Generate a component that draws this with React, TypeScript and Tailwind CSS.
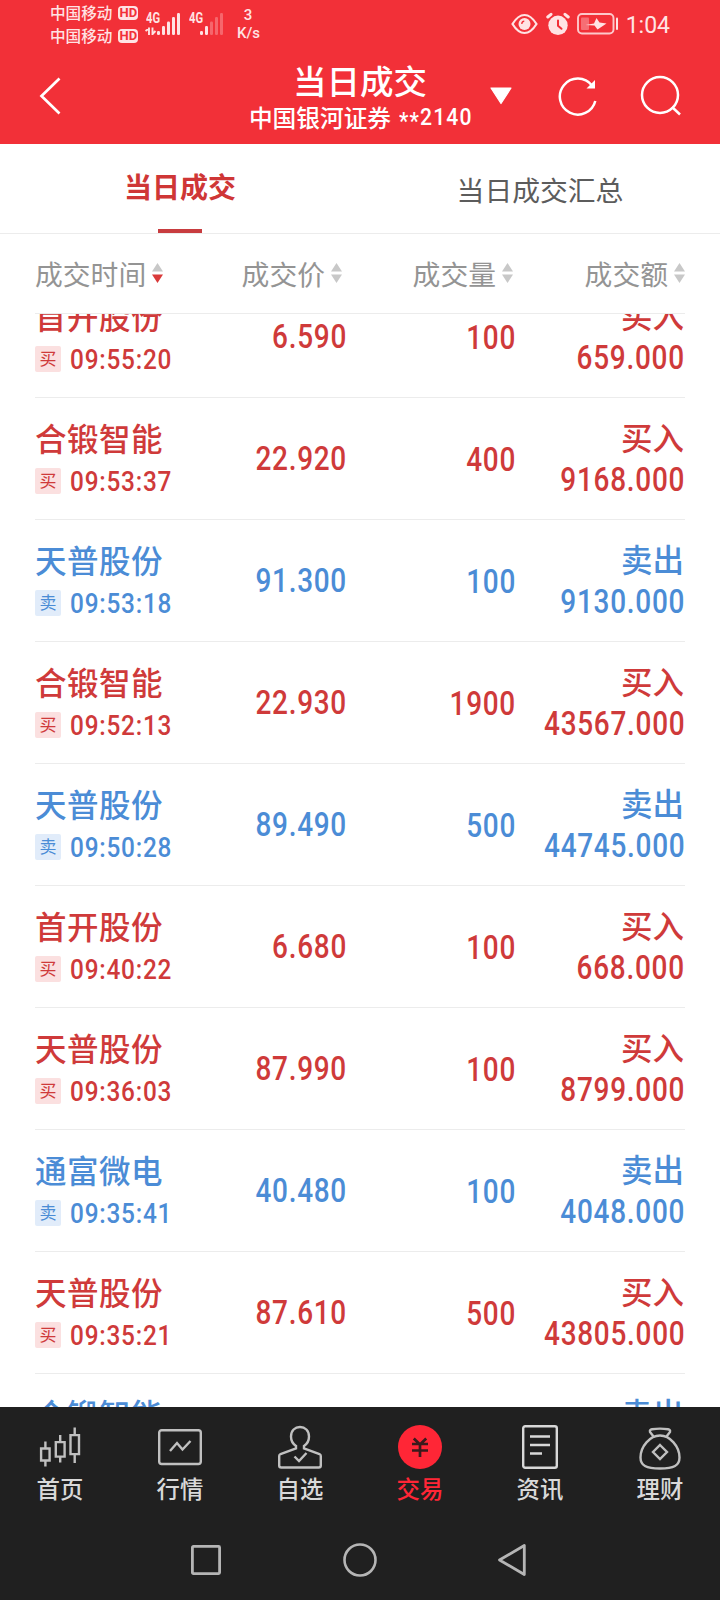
import type { ReactNode } from 'react';
import clsx from 'clsx';

interface Trade {
  name: string;
  time: string;
  price: string;
  volume: string;
  amount: string;
  side: 'buy' | 'sell';
}

const trades: Trade[] = [
  { name: '首开股份', time: '09:55:20', price: '6.590', volume: '100', amount: '659.000', side: 'buy' },
  { name: '合锻智能', time: '09:53:37', price: '22.920', volume: '400', amount: '9168.000', side: 'buy' },
  { name: '天普股份', time: '09:53:18', price: '91.300', volume: '100', amount: '9130.000', side: 'sell' },
  { name: '合锻智能', time: '09:52:13', price: '22.930', volume: '1900', amount: '43567.000', side: 'buy' },
  { name: '天普股份', time: '09:50:28', price: '89.490', volume: '500', amount: '44745.000', side: 'sell' },
  { name: '首开股份', time: '09:40:22', price: '6.680', volume: '100', amount: '668.000', side: 'buy' },
  { name: '天普股份', time: '09:36:03', price: '87.990', volume: '100', amount: '8799.000', side: 'buy' },
  { name: '通富微电', time: '09:35:41', price: '40.480', volume: '100', amount: '4048.000', side: 'sell' },
  { name: '天普股份', time: '09:35:21', price: '87.610', volume: '500', amount: '43805.000', side: 'buy' },
  { name: '合锻智能', time: '', price: '', volume: '', amount: '', side: 'sell' },
];

function Carrier() {
  return (
    <div className="flex h-6 items-center gap-[6px]">
      <span className="-mt-[1px] text-[15.600px] leading-5 font-medium">中国移动</span>
      <span className="flex h-[14px] w-5 items-center justify-center rounded-[4px] bg-[#ffe3e4] font-['Roboto'] text-[13px] leading-none font-bold text-[#f23038]">
        HD
      </span>
    </div>
  );
}

function Signal({ level, arrows }: { level: number; arrows?: boolean }) {
  return (
    <svg width="36" height="24" viewBox="0 0 36 24" fill="#ffe3e4">
      {arrows && (
        <path d="M4 14.500v7.500M7.500 14.500v7.500M4 15.500L.5 18M7.500 21L10.500 18" stroke="#ffe3e4" strokeWidth="1.900" fill="none" />
      )}
      {[0, 1, 2, 3, 4].map((i) => (
        <rect
          key={i}
          x={12 + i * 5}
          y={[18, 13, 8.5, 4, 0][i]}
          width="3"
          height={[4, 9, 13.5, 18, 22][i]}
          rx="1.200"
          opacity={i < level ? 1 : 0.3}
        />
      ))}
    </svg>
  );
}

function StatusBar() {
  return (
    <div className="flex h-[47px] pr-[50px] pl-[50px] text-[#ffe3e4]">
      <div className="flex w-[95px] flex-col pt-[1px]">
        <Carrier />
        <Carrier />
      </div>
      <div className="relative mt-[13px] h-6 w-[43px]">
        <span className="absolute top-0 left-[1px] origin-left scale-x-[0.8] font-['Roboto'] text-[14px] leading-[11px] font-bold">4G</span>
        <Signal level={5} arrows />
      </div>
      <div className="relative mt-[13px] h-6 w-[49px]">
        <span className="absolute top-0 left-[1px] origin-left scale-x-[0.8] font-['Roboto'] text-[14px] leading-[11px] font-bold">4G</span>
        <Signal level={2} />
      </div>
      <div className="mt-[6px] w-[22px] text-center font-['Roboto'] text-[15px] leading-[18px] font-medium">
        3<br />K/s
      </div>
      <div className="ml-auto flex h-[48px] items-center">
        <svg width="27" height="22" viewBox="0 0 27 22" fill="none" stroke="currentColor" strokeWidth="2.200">
          <path d="M1.500 11C5.500 4.500 9 2 13.500 2S21.500 4.500 25.500 11C21.500 17.500 18 20 13.500 20S5.500 17.500 1.500 11z" />
          <circle cx="13.500" cy="11" r="6" fill="currentColor" stroke="none" />
          <path d="M10.800 11a2.800 2.800 0 0 1 2.500-2.800" stroke="#f23038" strokeWidth="1.300" />
        </svg>
        <svg className="ml-2" width="24" height="24" viewBox="0 0 24 24" fill="none" strokeLinecap="round">
          <circle cx="12" cy="13.300" r="9.700" fill="currentColor" />
          <path d="M1.800 5L5 2.300M22.200 5L19 2.300" stroke="currentColor" strokeWidth="3" />
          <path d="M12 8.500v5.300l3.500 3" stroke="#f23038" strokeWidth="2" />
        </svg>
        <svg className="ml-[7px]" width="42" height="22" viewBox="0 0 42 22" fill="none">
          <rect x="1" y="1" width="35.500" height="19.500" rx="4" stroke="currentColor" strokeWidth="1.900" opacity=".85" />
          <rect x="4" y="4.500" width="8" height="12.500" rx="1" fill="currentColor" opacity=".35" />
          <path d="M8.500 12L17 10.500 19.500 5 22.500 9.500 29.500 10.500 20.500 16.500 17.500 12.500z" fill="currentColor" />
          <path d="M40 5.500v10.500" stroke="currentColor" strokeWidth="2" strokeLinecap="round" />
        </svg>
        <span className="ml-[7px] pt-[3px] font-['Roboto'] text-[23px] leading-6">1:04</span>
      </div>
    </div>
  );
}

function Header() {
  return (
    <div className="flex h-[97px] text-white">
      <svg className="mt-[30px] ml-[39px] shrink-0" width="24" height="38" viewBox="0 0 24 38" fill="none" stroke="currentColor" strokeWidth="2.700">
        <path d="M20.500 1.500L2.500 19l18 17.500" />
      </svg>
      <div className="ml-[162px] flex w-[272px] shrink-0 flex-col items-center">
        <div className="mt-[13px] -ml-[2px] text-[33.500px] leading-10 font-medium">当日成交</div>
        <div className="mt-[3px] -ml-[1px] flex h-7 items-center text-[23.700px] leading-7 font-medium whitespace-nowrap">
          中国银河证券
          <span className="ml-2 w-[73px] origin-left scale-x-[0.88] font-['Roboto'] text-[24px] tracking-[1.300px]">
            <span className="relative top-[4px]">**</span>2140
          </span>
        </div>
      </div>
      <svg className="mt-[40px] -ml-[8px] shrink-0" width="24" height="18" viewBox="0 0 24 18">
        <path d="M2 1h20L12 16.500z" fill="currentColor" stroke="currentColor" strokeWidth="1.200" strokeLinejoin="round" />
      </svg>
      <svg className="mt-[28px] ml-[45px] shrink-0" width="40" height="42" viewBox="0 0 40 42" fill="none" stroke="currentColor" strokeWidth="2.500">
        <path d="M34 10.500A18 18 0 1 0 37.300 26" />
        <path d="M37 5v8.500h-8.500z" fill="currentColor" stroke="none" />
      </svg>
      <svg className="mt-[28px] ml-[42px] shrink-0" width="42" height="42" viewBox="0 0 42 42" fill="none" stroke="currentColor" strokeWidth="2.500">
        <circle cx="20" cy="20" r="18" />
        <path d="M32 32L40 39.500" />
      </svg>
    </div>
  );
}

function SortHeader({ label, desc, className }: { label: string; desc?: boolean; className?: string }) {
  return (
    <div className={clsx('-mt-[2px] flex items-center gap-[6px]', className)}>
      <span className="text-[27.800px] leading-10">{label}</span>
      <svg className="mt-[1px]" width="11" height="20" viewBox="0 0 11 20" fill="#c8c8c8">
        <path d="M5.500 0L11 8.500H0z" />
        <path d="M5.500 20L0 11.500h11z" fill={desc ? '#d93a3a' : '#c8c8c8'} />
      </svg>
    </div>
  );
}

// Digits are set narrow, anchored to the right edge of their column
function Num({ children, className }: { children: ReactNode; className?: string }) {
  return (
    <span
      className={clsx(
        "block origin-right scale-x-[0.86] font-['Roboto'] text-[32.500px] leading-10 font-medium tracking-[0.850px]",
        className,
      )}
    >
      {children}
    </span>
  );
}

function TradeRow({ trade }: { trade: Trade }) {
  const buy = trade.side === 'buy';
  return (
    <div
      className={clsx(
        'grid h-[122px] shrink-0 grid-cols-[144px_168px_169px_169px] border-b border-[#ececec]',
        buy ? 'text-[#cf3a3a]' : 'text-[#4b8cd6]',
      )}
    >
      <div className="pt-[19px]">
        <div className="text-[31.500px] leading-10 font-medium tracking-[0.500px]">{trade.name}</div>
        {trade.time && (
          <div className="mt-[4px] flex items-center">
            <span
              className={clsx(
                'mt-[2px] flex size-[26px] shrink-0 items-center justify-center rounded-[2px] pb-[3px] text-[17px] leading-none',
                buy ? 'bg-[#fbe0e0]' : 'bg-[#e1ecfa]',
              )}
            >
              {buy ? '买' : '卖'}
            </span>
            <span className="mt-[5px] ml-[9px] origin-left scale-x-[0.87] font-['Roboto'] text-[28px] leading-8 font-medium tracking-[0.900px]">
              {trade.time}
            </span>
          </div>
        )}
      </div>
      <Num className="pt-[41px] text-right">{trade.price}</Num>
      <Num className="pt-[42px] text-right">{trade.volume}</Num>
      <div className="flex flex-col items-end pt-[18px]">
        <div className="mr-[1px] text-[31.500px] leading-10 font-medium">{buy ? '买入' : '卖出'}</div>
        <Num className="mt-[4px]">{trade.amount}</Num>
      </div>
    </div>
  );
}

const navItems: { label: string; active?: boolean; icon: ReactNode }[] = [
  {
    label: '首页',
    icon: (
      <path d="M3.100 22h8.500v12h-8.500zM7.400 22v-7M7.400 34v6M17.800 15.600h8.800v14.500h-8.800zM22.200 15.600V8.500M22.200 30v6M32.500 8.600h8.500v19h-8.500zM36.700 8.600V1M36.700 27.500v9" />
    ),
  },
  {
    label: '行情',
    icon: (
      <>
        <rect x="1.200" y="3.700" width="41.600" height="33.800" rx="2.500" />
        <path d="M12 24.500l7-8 5.500 6.500 8-8.500" />
      </>
    ),
  },
  {
    label: '自选',
    icon: (
      <>
        <path d="M18 19.500c-3-2-5-5.500-5-9.500C13 4 17 .5 22 .5S31 4 31 10c0 4-2 7.500-5 9.500v2.500L41.500 27.500c.9.400 1.300 1 1.300 2v9.500c0 1.500-.5 2-2 2H3.200c-1.500 0-2-.5-2-2v-9.500c0-1 .4-1.600 1.300-2L18 22z" />
        <path d="M16.500 30l4.500 4.500 7.500-8" />
      </>
    ),
  },
  {
    label: '交易',
    active: true,
    icon: (
      <>
        <circle cx="22" cy="20.500" r="22" fill="#ff2636" stroke="none" />
        <path d="M15.800 12l6.200 6 6.200-6M14 17.500h16M14 24h16M22 17.500v13" stroke="#3a1a1c" strokeWidth="2.700" />
      </>
    ),
  },
  {
    label: '资讯',
    icon: (
      <>
        <rect x="5.200" y="-.3" width="33.600" height="41.600" rx="2" stroke="#d8d8d8" />
        <path d="M12 10h20M12 18.500h20M12 27h12" stroke="#d8d8d8" strokeWidth="2.700" />
      </>
    ),
  },
  {
    label: '理财',
    icon: (
      <>
        <path d="M15.500 10L12 5.500C11.500 3.500 12.500 3 14 2.700c5-.7 11-.7 16 0 1.500.3 2.500.8 2 2.800L28.500 10" />
        <path d="M22 9C12 9 2.500 20 2.500 31c0 8 5.500 11 19.500 11s19.500-3 19.500-11C41.500 20 32 9 22 9z" />
        <path d="M22 18.500l7 7-7 7-7-7z" />
      </>
    ),
  },
];

function BottomNav() {
  return (
    <div className="h-[193px] shrink-0 bg-[#202020]">
      <div className="grid h-[113px] grid-cols-6">
        {navItems.map((item) => (
          <div key={item.label} className="flex flex-col items-center pt-[18px]">
            <svg className="overflow-visible" width="44" height="44" viewBox="0 -1.500 44 44" fill="none" stroke="#c0c0c0" strokeWidth="2.400">
              {item.icon}
            </svg>
            <span
              className={clsx(
                'mt-[3px] text-[23.400px] leading-8 font-medium',
                item.active ? 'text-[#ff2636]' : 'text-[#d9d9d9]',
              )}
            >
              {item.label}
            </span>
          </div>
        ))}
      </div>
      <div className="flex h-20 items-center pl-[190px]">
        <svg width="32" height="32" viewBox="0 0 32 32" fill="none" stroke="#b5b5b5" strokeWidth="2.800">
          <rect x="2.400" y="2.400" width="27.200" height="27.200" rx="1" />
        </svg>
        <svg className="ml-[121px]" width="34" height="34" viewBox="0 0 34 34" fill="none" stroke="#b5b5b5" strokeWidth="2.600">
          <circle cx="17" cy="17" r="15.500" />
        </svg>
        <svg className="ml-[119px]" width="32" height="36" viewBox="0 0 32 36" fill="none" stroke="#b5b5b5" strokeWidth="2.800" strokeLinejoin="round">
          <path d="M28.300 3.500v29L3.500 18z" />
        </svg>
      </div>
    </div>
  );
}

export default function App() {
  return (
    <div className="flex h-[1600px] w-[720px] flex-col overflow-hidden bg-white font-['Noto_Sans_CJK_SC',sans-serif]">
      <div className="h-36 shrink-0 bg-[#f23038]">
        <StatusBar />
        <Header />
      </div>

      <div className="grid h-[90px] shrink-0 grid-cols-2 border-b border-[#ececec] text-center">
        <div className="flex flex-col items-center justify-between pt-[22px] text-[28px] leading-10 font-bold text-[#cf3636]">
          当日成交
          <span className="h-1 w-11 bg-[#c83c3f]" />
        </div>
        <div className="pt-[25px] text-[27.800px] leading-10 text-[#5c5c5c]">当日成交汇总</div>
      </div>

      <div className="mx-[35px] grid h-20 shrink-0 grid-cols-[144px_168px_169px_169px] items-center border-b border-[#ececec] text-[#949494]">
        <SortHeader label="成交时间" desc />
        <SortHeader label="成交价" className="justify-end pr-[5px]" />
        <SortHeader label="成交量" className="justify-end pr-[3px]" />
        <SortHeader label="成交额" className="justify-end" />
      </div>

      <div className="min-h-0 flex-1 overflow-hidden px-[35px]">
        <div className="-mt-[38px] flex flex-col">
          {trades.map((trade, i) => (
            <TradeRow key={i} trade={trade} />
          ))}
        </div>
      </div>

      <BottomNav />
    </div>
  );
}
